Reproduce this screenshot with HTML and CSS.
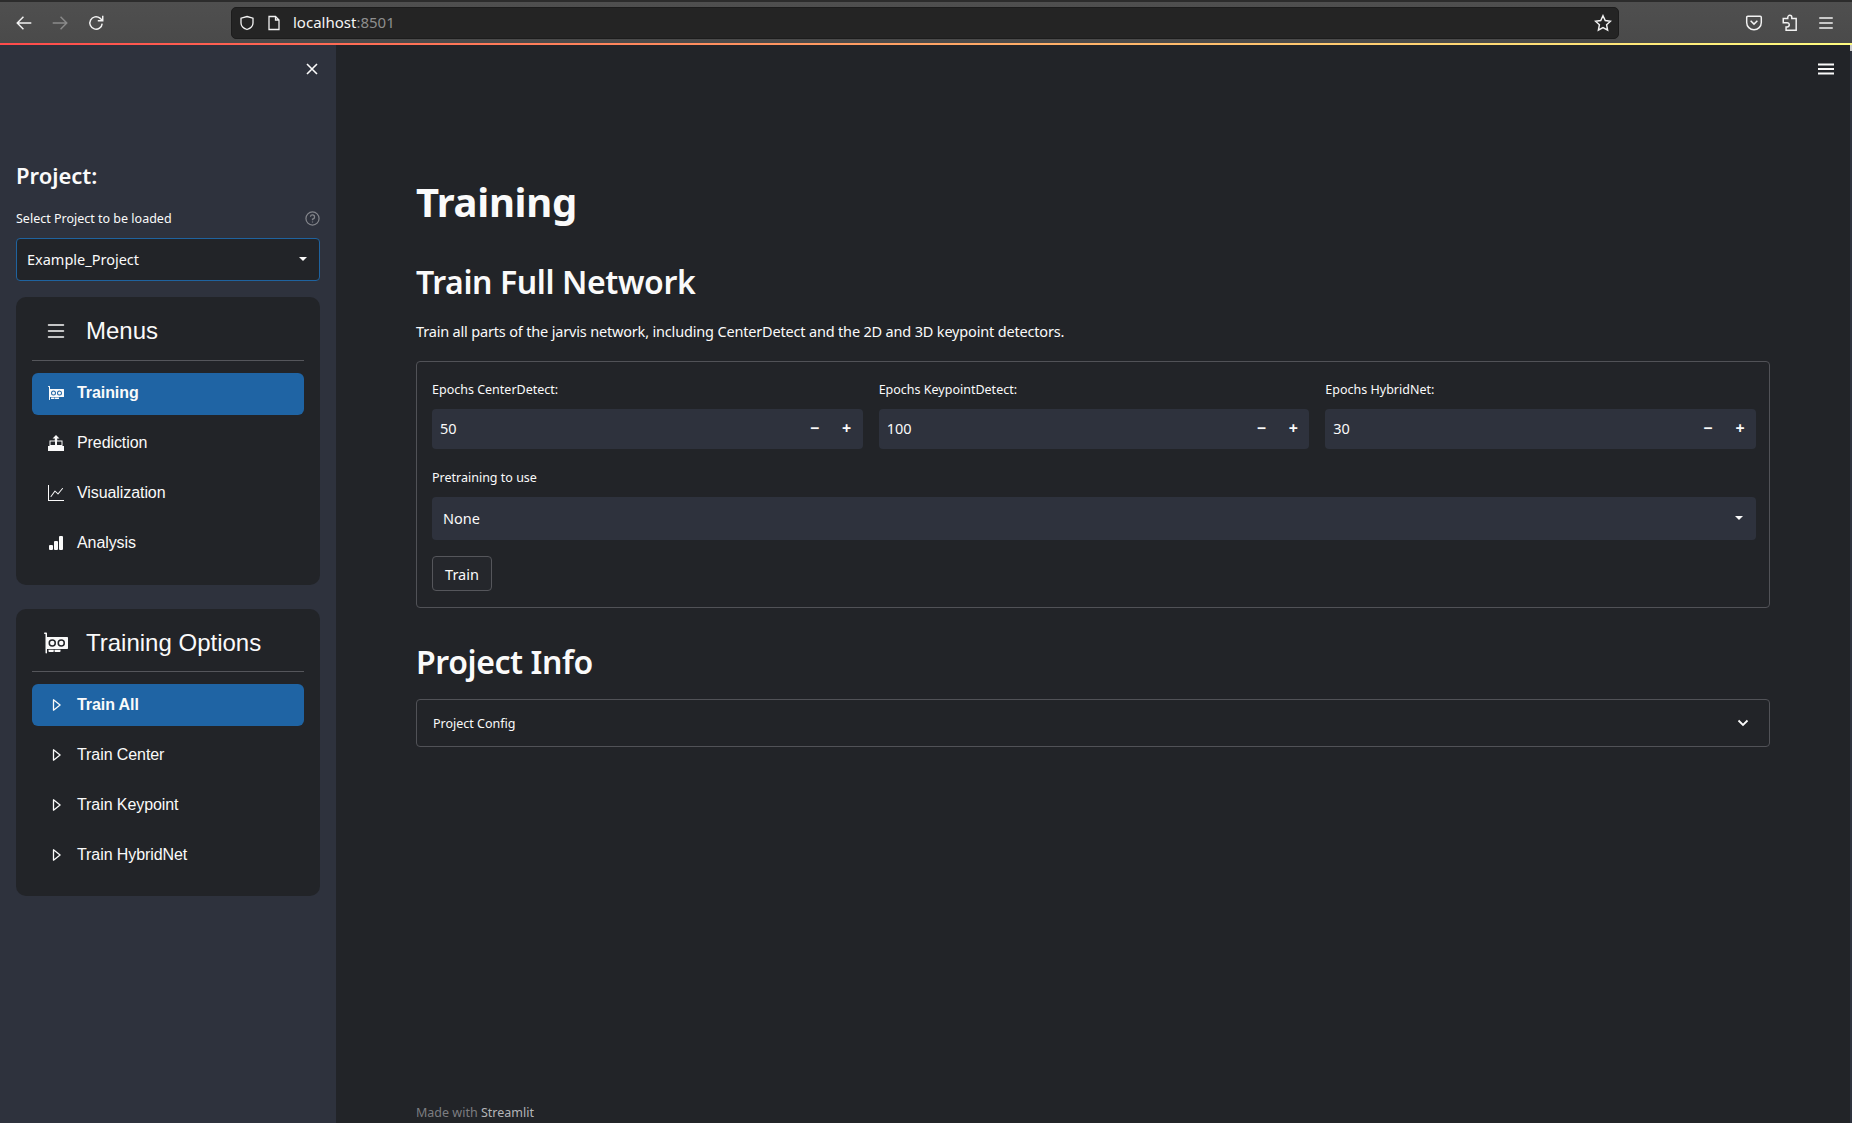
FILE: index.html
```html
<!DOCTYPE html>
<html lang="en">

<head>
    <meta charset="UTF-8">
    <meta name="viewport" content="width=device-width, initial-scale=1.0">
    <title>Training</title>
    <link rel="stylesheet" href="styles.css">
</head>

<body>
    <svg class="sprites" xmlns="http://www.w3.org/2000/svg">
        <symbol id="i_gpu" viewBox="0 0 16 16">
            <path d="M4 8a1.5 1.5 0 1 1 3 0 1.5 1.5 0 0 1-3 0Zm7.5-1.5a1.5 1.5 0 1 0 0 3 1.5 1.5 0 0 0 0-3Z"/>
            <path d="M0 1.5A.5.5 0 0 1 .5 1h1a.5.5 0 0 1 .5.5V4h13.5a.5.5 0 0 1 .5.5v7a.5.5 0 0 1-.5.5H2v2.5a.5.5 0 0 1-1 0V2H.5a.5.5 0 0 1-.5-.5Zm5.5 4a2.5 2.5 0 1 0 0 5 2.5 2.5 0 0 0 0-5ZM9 8a2.5 2.5 0 1 0 5 0 2.5 2.5 0 0 0-5 0Z"/>
            <path d="M3 12.5h3.5v1a.5.5 0 0 1-.5.5H3.5a.5.5 0 0 1-.5-.5v-1Zm4 1v-1h4v1a.5.5 0 0 1-.5.5h-3a.5.5 0 0 1-.5-.5Z"/>
        </symbol>
        <symbol id="i_play" viewBox="0 0 16 16">
            <path class="play_line" d="M5.500 2.800V13.200L12.100 8Z"/>
        </symbol>
    </svg>

    <header class="toolbar">
        <div class="nav_btns">
            <svg class="tb_icon" viewBox="0 0 16 16"><path d="M14.5 8H2M7.5 2.5 2 8l5.5 5.5"/></svg>
            <svg class="tb_icon dim" viewBox="0 0 16 16"><path d="M1.5 8H14M8.5 2.5 14 8l-5.5 5.5"/></svg>
            <svg class="tb_icon" viewBox="0 0 16 16"><path d="M13.5 8.5A5.5 5.5 0 1 1 11.5 3.7L14 6M14 1.5V6H9.6"/></svg>
        </div>
        <div class="urlbar">
            <svg class="tb_icon small" viewBox="0 0 16 16"><path d="M8 1.5 14 3.2V8c0 3.2-2.6 5.4-6 6.5C4.600 13.400 2 11.200 2 8V3.200Z"/></svg>
            <svg class="tb_icon small page_icon" viewBox="0 0 16 16"><path d="M3 1.500H9.500L13 5V14.500H3ZM9.500 1.500V5H13"/></svg>
            <span class="url">localhost<span class="url_port">:8501</span></span>
            <svg class="tb_icon star" viewBox="0 0 16 16"><path d="M8 1.500 10 5.800 14.700 6.400 11.200 9.600 12.100 14.300 8 12 3.900 14.300 4.800 9.600 1.300 6.400 6 5.800Z"/></svg>
        </div>
        <div class="tool_btns">
            <svg class="tb_icon" viewBox="0 0 16 16"><path d="M2.500 2H13.500A1 1 0 0 1 14.500 3V7.500A6.500 6.500 0 0 1 1.500 7.500V3A1 1 0 0 1 2.500 2ZM5 6 8 9 11 6"/></svg>
            <svg class="tb_icon" viewBox="0 0 16 16"><path d="M6 4V3A1.800 1.800 0 0 1 9.600 3V4H13.500V14.500H4.500V11.500H5.500A1.800 1.800 0 0 0 5.500 7.800H2V4Z"/></svg>
            <svg class="tb_icon" viewBox="0 0 16 16"><path d="M2 3.500H14M2 8H14M2 12.500H14"/></svg>
        </div>
    </header>
    <div class="rainbow"></div>

    <div class="app">
        <aside class="sidebar">
            <div class="close_row">
                <svg class="close_x" viewBox="0 0 12 12"><path d="M1 1 11 11M11 1 1 11"/></svg>
            </div>
            <h3 class="side_title">Project:</h3>
            <div class="side_label">
                <span>Select Project to be loaded</span>
                <svg class="help" viewBox="0 0 16 16"><circle cx="8" cy="8" r="7"/><path d="M5.800 6.200A2.200 2.200 0 1 1 8 8.600V9.800M8 11.300V12.300"/></svg>
            </div>
            <div class="project_select">
                <span>Example_Project</span>
                <i class="caret"></i>
            </div>

            <nav class="menu_card menu_first">
                <div class="menu_title">
                    <svg class="title_icon" viewBox="0 0 16 16"><path fill-rule="evenodd" d="M2.500 12a.5.5 0 0 1 .5-.5h10a.5.5 0 0 1 0 1H3a.5.5 0 0 1-.5-.5zm0-4a.5.5 0 0 1 .5-.5h10a.5.5 0 0 1 0 1H3a.5.5 0 0 1-.5-.5zm0-4a.5.5 0 0 1 .5-.5h10a.5.5 0 0 1 0 1H3a.5.5 0 0 1-.5-.5z"/></svg>
                    <span>Menus</span>
                </div>
                <ul class="menu_list">
                    <li class="active"><svg class="item_icon"><use href="#i_gpu"/></svg>Training</li>
                    <li>
                        <svg class="item_icon" viewBox="0 0 16 16"><path fill-rule="evenodd" d="M8 0 11.500 3.500H9.200V5.500H14.500V11H16V16H0V11H1.500V5.500H6.800V3.500H4.500ZM2.500 6.500V10H7V6.500ZM9 6.500V10H13.500V6.500Z"/></svg>Prediction
                    </li>
                    <li>
                        <svg class="item_icon" viewBox="0 0 16 16"><path fill-rule="evenodd" d="M0 0h1v15h15v1H0V0Zm14.817 3.113a.5.5 0 0 1 .07.704l-4.500 5.500a.5.5 0 0 1-.74.037L7.060 6.767l-3.656 5.027a.5.5 0 0 1-.808-.588l4-5.500a.5.5 0 0 1 .758-.06l2.609 2.610 4.150-5.073a.5.5 0 0 1 .704-.07Z"/></svg>Visualization
                    </li>
                    <li>
                        <svg class="item_icon" viewBox="0 0 16 16"><path d="M1 11a1 1 0 0 1 1-1h2a1 1 0 0 1 1 1v3a1 1 0 0 1-1 1H2a1 1 0 0 1-1-1v-3zm5-4a1 1 0 0 1 1-1h2a1 1 0 0 1 1 1v7a1 1 0 0 1-1 1H7a1 1 0 0 1-1-1V7zm5-5a1 1 0 0 1 1-1h2a1 1 0 0 1 1 1v12a1 1 0 0 1-1 1h-2a1 1 0 0 1-1-1V2z"/></svg>Analysis
                    </li>
                </ul>
            </nav>

            <nav class="menu_card">
                <div class="menu_title">
                    <svg class="title_icon"><use href="#i_gpu"/></svg>
                    <span>Training Options</span>
                </div>
                <ul class="menu_list">
                    <li class="active"><svg class="item_icon"><use href="#i_play"/></svg>Train All</li>
                    <li><svg class="item_icon"><use href="#i_play"/></svg>Train Center</li>
                    <li><svg class="item_icon"><use href="#i_play"/></svg>Train Keypoint</li>
                    <li><svg class="item_icon"><use href="#i_play"/></svg>Train HybridNet</li>
                </ul>
            </nav>
        </aside>

        <main class="main">
            <div class="burger_row">
                <svg class="burger" viewBox="0 0 16 12"><path d="M0 1.500H16M0 6H16M0 10.500H16"/></svg>
            </div>
            <h1>Training</h1>
            <h2 class="full_net">Train Full Network</h2>
            <p class="intro">Train all parts of the jarvis network, including CenterDetect and the 2D and 3D keypoint detectors.</p>

            <form class="train_form">
                <div class="epoch_row">
                    <div class="field">
                        <label>Epochs CenterDetect:</label>
                        <div class="number_input"><span>50</span><b>&minus;</b><b>+</b></div>
                    </div>
                    <div class="field">
                        <label>Epochs KeypointDetect:</label>
                        <div class="number_input"><span>100</span><b>&minus;</b><b>+</b></div>
                    </div>
                    <div class="field">
                        <label>Epochs HybridNet:</label>
                        <div class="number_input"><span>30</span><b>&minus;</b><b>+</b></div>
                    </div>
                </div>
                <div class="field">
                    <label>Pretraining to use</label>
                    <div class="pre_select"><span>None</span><i class="caret"></i></div>
                </div>
                <button class="train_btn" type="button">Train</button>
            </form>

            <h2 class="info">Project Info</h2>
            <div class="expander">
                <span>Project Config</span>
                <svg class="chevron" viewBox="0 0 12 8"><path d="M1.500 1.500 6 6 10.500 1.500"/></svg>
            </div>

            <footer class="foot">Made with <span>Streamlit</span></footer>
        </main>
    </div>
</body>

</html>
```

FILE: styles.css
```css
* {
    margin: 0;
    padding: 0;
    box-sizing: border-box;
    list-style: none;
}

html, body {
    height: 100%;
    overflow: hidden;
}

body {
    background-color: #222428;
    color: #fafafa;
    font-family: "Noto Sans", sans-serif;
    display: flex;
    flex-direction: column;
}

.sprites {
    display: none;
}

/* browser bar */
.toolbar {
    height: 43px;
    flex: none;
    display: flex;
    align-items: center;
    padding: 0 0 0 15px;
    background: linear-gradient(#4f4f4f, #4a4a4a);
    border-top: 2px solid #2c2c2c;
}
.tb_icon {
    width: 18px;
    height: 18px;
    fill: none;
    stroke: #f2f2f2;
    stroke-width: 1.300;
}
.tb_icon.dim {
    stroke: #8a8a8a;
}
.tb_icon.small {
    width: 16px;
    height: 16px;
}
.nav_btns {
    width: 216px;
    display: flex;
    gap: 18px;
    flex: none;
}
.urlbar {
    width: 1388px;
    height: 32px;
    flex: none;
    display: flex;
    align-items: center;
    padding: 0 6px 0 7px;
    background-color: #242424;
    border: 1px solid #1c1c1c;
    border-radius: 5px;
}
.page_icon {
    margin-left: 11px;
}
.url {
    margin-left: 11px;
    font-size: 15px;
    padding-bottom: 2px;
    color: #f5f5f5;
    flex: 1;
}
.url_port {
    color: #8e8e8e;
}
.star {
    flex: none;
}
.tool_btns {
    display: flex;
    gap: 18px;
    margin-left: 126px;
}
.rainbow {
    height: 2px;
    flex: none;
    background: linear-gradient(90deg, #ff4b4b, #fffd80);
}

.app {
    flex: 1;
    display: flex;
    min-height: 0;
}

/* sidebar */
.sidebar {
    width: 336px;
    flex: none;
    background-color: #2e323d;
    padding: 0 16px;
}
.close_row {
    height: 45px;
    padding: 18px 0 0;
    display: flex;
    justify-content: flex-end;
    margin-right: 2px;
}
.close_x {
    width: 12px;
    height: 12px;
    fill: none;
    stroke: #fafafa;
    stroke-width: 1.600;
}
.side_title {
    margin-top: 70px;
    font-size: 22px;
    font-weight: 600;
    line-height: 30px;
}
.side_label {
    margin-top: 18px;
    display: flex;
    justify-content: space-between;
    align-items: center;
    font-size: 12.500px;
    height: 20px;
}
.help {
    width: 15px;
    height: 15px;
    fill: none;
    stroke: #83858b;
    stroke-width: 1.300;
}
.project_select {
    margin-top: 10px;
    height: 43px;
    display: flex;
    align-items: center;
    justify-content: space-between;
    padding: 0 12px 2px 10px;
    background-color: #222428;
    border: 1px solid #1f639f;
    border-radius: 4px;
    font-size: 14.500px;
}
.caret {
    width: 0;
    height: 0;
    border-left: 4px solid transparent;
    border-right: 4px solid transparent;
    border-top: 4px solid #fafafa;
}
.menu_card {
    margin-top: 24px;
    height: 287.500px;
    padding: 0 16px;
    background-color: #222428;
    border-radius: 10px;
    font-family: "Liberation Sans", sans-serif;
}
.menu_first {
    margin-top: 16px;
}
.menu_title {
    height: 63.500px;
    display: flex;
    align-items: center;
    padding: 6px 0 0 12px;
    border-bottom: 1px solid #55565b;
    font-size: 24px;
    gap: 18px;
}
.title_icon {
    width: 24px;
    height: 24px;
    fill: #fafafa;
    flex: none;
}
.menu_list {
    margin-top: 12px;
}
.menu_list li {
    height: 42px;
    margin-bottom: 8px;
    display: flex;
    align-items: center;
    gap: 13px;
    padding-left: 16px;
    border-radius: 6px;
    font-size: 16px;
    letter-spacing: -0.08px;
}
.menu_first .menu_list li {
    padding-bottom: 2px;
}
.menu_list li.active {
    background-color: #1f64a4;
    font-weight: 700;
}
.item_icon {
    width: 16px;
    height: 16px;
    fill: #fafafa;
    flex: none;
}
.play_line {
    fill: none;
    stroke: #fafafa;
    stroke-width: 1.300;
    stroke-linejoin: round;
}

/* main column */
.main {
    flex: 1;
    min-width: 0;
    padding: 0 82px 0 80px;
    position: relative;
    display: flex;
    flex-direction: column;
}
.main::after {
    content: "";
    position: absolute;
    top: 0;
    right: 0;
    width: 2px;
    height: 100%;
    background: linear-gradient(#c8c8c8 6px, #2e323d 6px);
}
.burger_row {
    height: 0;
    display: flex;
    justify-content: flex-end;
    margin-right: -64px;
    padding-top: 18px;
}
.burger {
    width: 16px;
    height: 12px;
    flex: none;
    fill: none;
    stroke: #fafafa;
    stroke-width: 1.800;
}
h1 {
    margin-top: 109px;
    font-size: 40px;
    font-weight: 700;
    line-height: 60px;
    letter-spacing: -0.3px;
}
h2 {
    font-size: 32px;
    font-weight: 600;
    line-height: 46px;
    letter-spacing: -0.4px;
}
.full_net {
    margin-top: 27px;
}
.intro {
    margin-top: 15px;
    font-size: 14.500px;
    line-height: 22px;
    letter-spacing: -0.175px;
}
.train_form {
    margin-top: 19px;
    height: 247px;
    padding: 16px 13px 16px 15px;
    border: 1px solid #515257;
    border-radius: 4px;
    display: flex;
    flex-direction: column;
    align-items: flex-start;
}
.epoch_row {
    align-self: stretch;
    display: grid;
    grid-template-columns: repeat(3, 1fr);
    gap: 16px;
}
.train_form > .field {
    align-self: stretch;
    margin-top: 17px;
}
label {
    display: block;
    height: 24px;
    font-size: 12.500px;
    line-height: 24px;
    margin-bottom: 7px;
}
.number_input {
    height: 40px;
    display: flex;
    align-items: center;
    padding: 0 0 3px 8px;
    background-color: #2e323d;
    border-radius: 4px;
    font-size: 14.500px;
}
.number_input span {
    flex: 1;
}
.number_input b {
    width: 32px;
    text-align: center;
    font-size: 16px;
}
.pre_select {
    height: 43px;
    display: flex;
    align-items: center;
    justify-content: space-between;
    padding: 0 13px 2px 11px;
    background-color: #2e323d;
    border-radius: 4px;
    font-size: 14.500px;
}
.train_btn {
    margin-top: 16px;
    width: 60px;
    height: 36px;
    background-color: #25272c;
    color: #fafafa;
    border: 1px solid #55565b;
    border-radius: 4px;
    font-family: inherit;
    font-size: 14.500px;
}
.info {
    margin-top: 31px;
}
.expander {
    margin-top: 14px;
    height: 48px;
    display: flex;
    align-items: center;
    justify-content: space-between;
    padding: 0 20px 0 16px;
    border: 1px solid #515257;
    border-radius: 4px;
    font-size: 12.500px;
}
.chevron {
    width: 12px;
    height: 8px;
    fill: none;
    stroke: #fafafa;
    stroke-width: 1.800;
}
.foot {
    margin-top: auto;
    padding-bottom: 0;
    line-height: 20px;
    font-size: 12.500px;
    color: #7c7d81;
}
.foot span {
    color: #b4b5b8;
}
```
